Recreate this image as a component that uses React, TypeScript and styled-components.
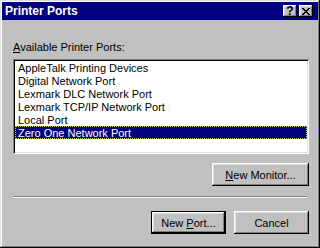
import React from "react";
import styled, { createGlobalStyle } from "styled-components";

const GlobalStyle = createGlobalStyle`
    html, body {
        margin: 0;
        padding: 0;
        background: #c0c0c0;
    }
    * {
        box-sizing: border-box;
    }
`;

const Window = styled.div`
    width: 320px;
    height: 248px;
    padding: 2px;
    background: #c0c0c0;
    font-family: "Liberation Sans", Arial, sans-serif;
    font-size: 11px;
    color: #000;
    display: flex;
    flex-direction: column;
    box-shadow: inset -1px -1px #000, inset 1px 1px #dfdfdf,
        inset -2px -2px #808080, inset 2px 2px #fff;
`;

const TitleBar = styled.div`
    height: 18px;
    background: #000080;
    display: flex;
    align-items: center;
    padding: 0 5px 0 3px;
`;

const Title = styled.span`
    flex: 1;
    color: #fff;
    font-weight: bold;
    font-size: 12px;
`;

const TitleButton = styled.div<{ $gap?: boolean }>`
    width: 14px;
    height: 12px;
    margin-left: ${(p) => (p.$gap ? "2px" : "0")};
    background: #c0c0c0;
    display: flex;
    align-items: center;
    justify-content: center;
    font-weight: bold;
    font-size: 12px;
    line-height: 1;
    box-shadow: inset -1px -1px #000, inset 1px 1px #fff,
        inset -2px -2px #808080, inset 2px 2px #dfdfdf;
`;

const Body = styled.div`
    flex: 1;
    display: flex;
    flex-direction: column;
    padding: 21px 9px 0 11px;
`;

const Label = styled.div`
    line-height: 13px;
    margin-bottom: 5px;
`;

const ListBox = styled.div`
    height: 95px;
    background: #fff;
    padding: 2px;
    box-shadow: inset 1px 1px #808080, inset -1px -1px #fff,
        inset 2px 2px #000, inset -2px -2px #dfdfdf;
`;

const Item = styled.div<{ $selected?: boolean }>`
    height: 13px;
    line-height: 12px;
    padding: 0 2px;
    white-space: nowrap;
    background: ${(p) => (p.$selected ? "#000080" : "transparent")};
    color: ${(p) => (p.$selected ? "#fff" : "#000")};
    border: 1px dotted ${(p) => (p.$selected ? "#c8c870" : "transparent")};
`;

const Row = styled.div<{ $top: number }>`
    display: flex;
    justify-content: flex-end;
    gap: 8px;
    margin-top: ${(p) => p.$top}px;
`;

const Button = styled.button<{ $width: number; $default?: boolean }>`
    width: ${(p) => p.$width}px;
    height: 23px;
    padding: 0;
    background: #c0c0c0;
    font-family: inherit;
    font-size: 11px;
    color: #000;
    border: ${(p) => (p.$default ? "1px solid #000" : "none")};
    box-shadow: inset -1px -1px #000, inset 1px 1px #fff,
        inset -2px -2px #808080, inset 2px 2px #dfdfdf;
`;

const Separator = styled.div`
    height: 2px;
    margin: 10px 2px 0 1px;
    border-top: 1px solid #808080;
    border-bottom: 1px solid #fff;
`;

const U = styled.span`
    text-decoration: underline;
`;

const ports = [
    "AppleTalk Printing Devices",
    "Digital Network Port",
    "Lexmark DLC Network Port",
    "Lexmark TCP/IP Network Port",
    "Local Port",
    "Zero One Network Port",
];

function CloseGlyph() {
    return (
        <svg width="8" height="7" viewBox="0 0 8 7">
            <path
                d="M0 0h2v1h1v1h2V1h1V0h2v1H7v1H6v1H5v1h1v1h1v1h1v1H6V6H5V5H3v1H2v1H0V6h1V5h1V4h1V3H2V2H1V1H0z"
                fill="#000"
            />
        </svg>
    );
}

export default function App() {
    return (
        <>
            <GlobalStyle />
            <Window>
                <TitleBar>
                    <Title>Printer Ports</Title>
                    <TitleButton>?</TitleButton>
                    <TitleButton $gap>
                        <CloseGlyph />
                    </TitleButton>
                </TitleBar>
                <Body>
                    <Label>
                        <U>A</U>vailable Printer Ports:
                    </Label>
                    <ListBox>
                        {ports.map((port, i) => (
                            <Item key={port} $selected={i === ports.length - 1}>
                                {port}
                            </Item>
                        ))}
                    </ListBox>
                    <Row $top={9}>
                        <Button $width={97}>
                            <U>N</U>ew Monitor...
                        </Button>
                    </Row>
                    <Separator />
                    <Row $top={13}>
                        <Button $width={75} $default>
                            New <U>P</U>ort...
                        </Button>
                        <Button $width={75}>Cancel</Button>
                    </Row>
                </Body>
            </Window>
        </>
    );
}
